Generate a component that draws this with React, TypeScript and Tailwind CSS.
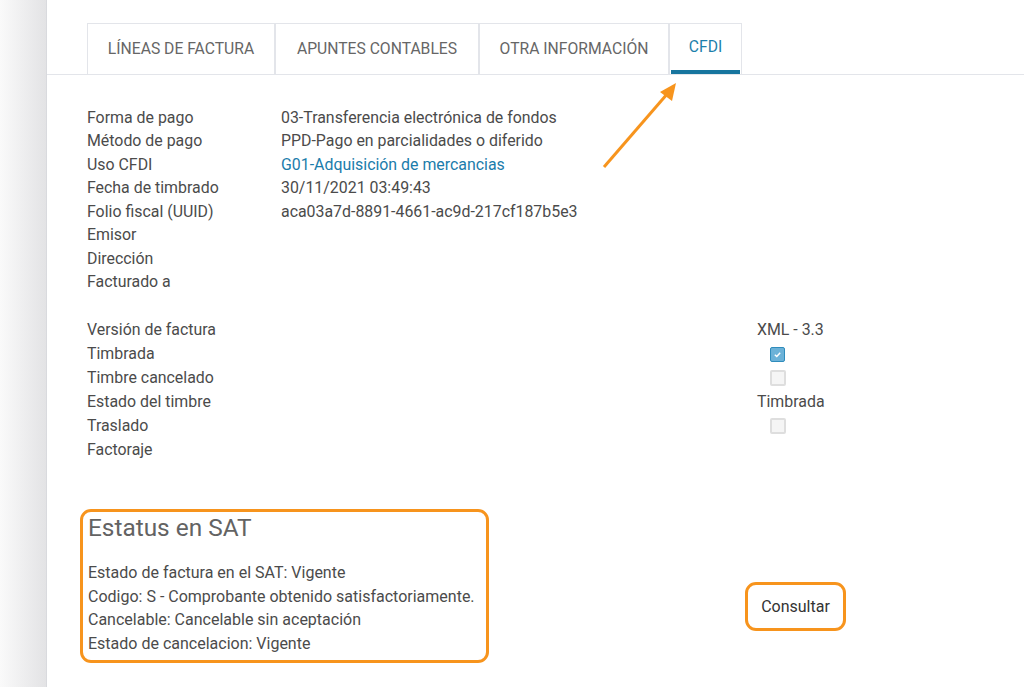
const tabs = [
  { label: "LÍNEAS DE FACTURA", width: "w-[188px]", active: false },
  { label: "APUNTES CONTABLES", width: "w-[204px]", active: false },
  { label: "OTRA INFORMACIÓN", width: "w-[190px]", active: false },
  { label: "CFDI", width: "w-[73px]", active: true },
]

const general = [
  { label: "Forma de pago", value: "03-Transferencia electrónica de fondos" },
  { label: "Método de pago", value: "PPD-Pago en parcialidades o diferido" },
  { label: "Uso CFDI", value: "G01-Adquisición de mercancias", link: true },
  { label: "Fecha de timbrado", value: "30/11/2021 03:49:43" },
  { label: "Folio fiscal (UUID)", value: "aca03a7d-8891-4661-ac9d-217cf187b5e3" },
  { label: "Emisor", value: "" },
  { label: "Dirección", value: "" },
  { label: "Facturado a", value: "" },
]

type Extra = { label: string; text?: string; check?: boolean }

const extras: Extra[] = [
  { label: "Versión de factura", text: "XML - 3.3" },
  { label: "Timbrada", check: true },
  { label: "Timbre cancelado", check: false },
  { label: "Estado del timbre", text: "Timbrada" },
  { label: "Traslado", check: false },
  { label: "Factoraje" },
]

const satLines = [
  "Estado de factura en el SAT: Vigente",
  "Codigo: S - Comprobante obtenido satisfactoriamente.",
  "Cancelable: Cancelable sin aceptación",
  "Estado de cancelacion: Vigente",
]

function Checkbox({ checked }: { checked: boolean }) {
  if (checked) {
    return (
      <span className="ml-[13px] flex h-[15px] w-[15px] items-center justify-center rounded-[2px] border border-[#2f8cbc] bg-[#6cb2d8]">
        <svg width="9" height="9" viewBox="0 0 10 10">
          <path d="M2 5.2 4.2 7.2 8 3" fill="none" stroke="#ffffff" strokeWidth="1.6" />
        </svg>
      </span>
    )
  }
  return <span className="ml-[13px] block h-[16px] w-[16px] rounded-[2px] border-2 border-[#dedede] bg-[#f5f5f5]" />
}

export default function App() {
  return (
    <div className="relative flex h-[687px] w-full overflow-hidden bg-white font-['Roboto',sans-serif] text-[#4b4b4b]">
      <div className="w-[47px] shrink-0 border-r border-[#d9dade] bg-gradient-to-r from-[#fafafa] to-[#e3e3e5]" />

      <div className="flex-1">
        {/* tabs */}
        <div className="flex border-b border-[#e3e5ea] pl-[40px] pt-[23px]">
          {tabs.map((tab) => (
            <div
              key={tab.label}
              className={`flex h-[51px] ${tab.width} flex-col border-x border-t border-[#e3e5ea] ${tab.active ? "text-[#1c7fab]" : "text-[#666666]"}`}
            >
              <div className="flex flex-1 items-center justify-center text-[15.7px]">{tab.label}</div>
              {tab.active && <div className="mx-[1px] h-[4px] bg-[#17759e]" />}
            </div>
          ))}
        </div>

        <div className="pl-[40px] pt-[31px] text-[15.9px]">
          {general.map((row) => (
            <div key={row.label} className="flex h-[23.5px] items-center">
              <span className="w-[194px]">{row.label}</span>
              <span className={row.link ? "text-[#1b7cab]" : ""}>{row.value}</span>
            </div>
          ))}
        </div>

        <div className="pl-[40px] pt-[24px] text-[15.9px]">
          {extras.map((row) => (
            <div key={row.label} className="flex h-[24px] items-center">
              <span className="w-[670px]">{row.label}</span>
              {row.text && <span>{row.text}</span>}
              {row.check !== undefined && <Checkbox checked={row.check} />}
            </div>
          ))}
        </div>

        <div className="flex items-start pl-[33px] pt-[47px]">
          <div className="h-[154px] w-[409px] rounded-[11px] border-[3px] border-[#f7941d] px-[5px]">
            <h2 className="pt-[1px] text-[24.4px] leading-[30px] text-[#636363]">Estatus en SAT</h2>
            <div className="pt-[18px] text-[16px]">
              {satLines.map((line) => (
                <div key={line} className="h-[23.5px] leading-[23.5px]">
                  {line}
                </div>
              ))}
            </div>
          </div>
          <button className="ml-[256px] mt-[73px] h-[49px] w-[101px] rounded-[11px] border-[3px] border-[#f7941d] text-[16px] text-[#333333]">
            Consultar
          </button>
        </div>
      </div>

      {/* annotation arrow */}
      <svg className="absolute left-0 top-0" width="1024" height="687">
        <line x1="604" y1="167" x2="668" y2="93" stroke="#f7941d" strokeWidth="3" />
        <polygon points="676,83 660,92 672,101" fill="#f7941d" />
      </svg>
    </div>
  )
}
